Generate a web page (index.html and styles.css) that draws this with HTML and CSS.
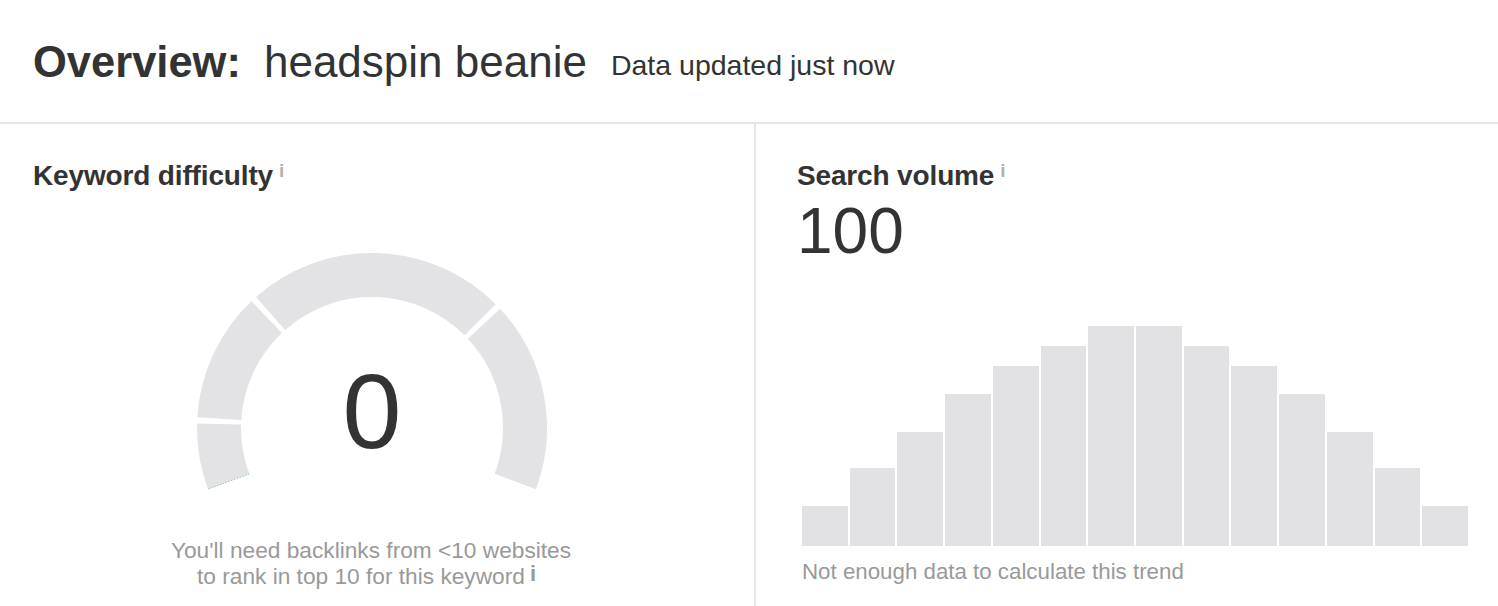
FILE: index.html
```html
<!DOCTYPE html>
<html lang="en">
<head>
<meta charset="utf-8">
<title>Overview: headspin beanie</title>
<link rel="stylesheet" href="styles.css">
</head>
<body>
<header class="top">
  <h1 class="title"><span class="title-label">Overview:</span><span class="title-kw">headspin beanie</span></h1><span class="updated">Data updated just now</span>
</header>
<main class="panels">
  <section class="panel panel-kd">
    <h2 class="panel-title">Keyword difficulty<span class="info">i</span></h2>
    <div class="gauge">
      <svg class="gauge-svg" width="350" height="238" viewBox="0 0 350 238">
        <g fill="none" stroke="#e3e3e5" stroke-width="44">
          <path d="M31.69 228.58 A153 153 0 0 1 22.05 170.99"/>
          <path d="M22.29 165.66 A153 153 0 0 1 69.68 64.02"/>
          <path d="M73.62 60.41 A153 153 0 0 1 283.19 66.81"/>
          <path d="M286.90 70.65 A153 153 0 0 1 318.31 228.58"/>
        </g>
        <line x1="11.5" y1="236" x2="52.3" y2="220.9" stroke="#6cbf8e" stroke-width="1" stroke-dasharray="1.5 1.5" opacity="0.75"/>
      </svg>
      <div class="gauge-value">0</div>
    </div>
    <p class="note">You'll need backlinks from &lt;10 websites<br>to rank in top 10 for this keyword<span class="info info-note">i</span></p>
  </section>
  <section class="panel panel-sv">
    <h2 class="panel-title">Search volume<span class="info">i</span></h2>
    <div class="volume">100</div>
    <div class="chart">
      <div class="bar" style="height:40px"></div>
      <div class="bar" style="height:78px"></div>
      <div class="bar" style="height:114px"></div>
      <div class="bar" style="height:152px"></div>
      <div class="bar" style="height:180px"></div>
      <div class="bar" style="height:200px"></div>
      <div class="bar" style="height:220px"></div>
      <div class="bar" style="height:220px"></div>
      <div class="bar" style="height:200px"></div>
      <div class="bar" style="height:180px"></div>
      <div class="bar" style="height:152px"></div>
      <div class="bar" style="height:114px"></div>
      <div class="bar" style="height:78px"></div>
      <div class="bar" style="height:40px"></div>
    </div>
    <p class="trend">Not enough data to calculate this trend</p>
  </section>
</main>
</body>
</html>
```
FILE: styles.css
```css
* { box-sizing: border-box; }
html, body {
  margin: 0;
  padding: 0;
  background: #fff;
}
body {
  font-family: "Liberation Sans", Arial, Helvetica, sans-serif;
  color: #333;
  width: 1498px;
  height: 606px;
  overflow: hidden;
}
.top {
  height: 124px;
  padding: 37px 0 0 33px;
  border-bottom: 2px solid #e6e6e6;
  white-space: nowrap;
  line-height: 50px;
}
.title {
  display: inline;
  margin: 0;
  font-size: 44px;
  font-weight: normal;
  color: #333;
}
.title-label {
  font-weight: bold;
  font-size: 43.5px;
  margin-right: 23px;
}
.updated {
  font-size: 28.5px;
  margin-left: 24px;
  color: #333;
  vertical-align: 2px;
}
.panels {
  display: flex;
  height: 482px;
}
.panel {
  padding-top: 36px;
}
.panel-kd {
  width: 756px;
  padding-left: 33px;
  padding-right: 45px;
  border-right: 2px solid #e6e6e6;
  display: flex;
  flex-direction: column;
}
.panel-sv {
  flex: 1;
  padding-left: 41px;
  display: flex;
  flex-direction: column;
}
.panel-title {
  margin: 0;
  font-size: 28px;
  line-height: 32px;
  font-weight: bold;
  color: #333;
  letter-spacing: -0.15px;
}
.info {
  font-size: 19px;
  font-weight: bold;
  color: #b0b0b0;
  line-height: 0;
  vertical-align: 8px;
  margin-left: 6px;
  letter-spacing: 0;
}
.gauge {
  position: relative;
  width: 350px;
  height: 238px;
  margin: 61px 0 0 164px;
}
.gauge-svg {
  display: block;
}
.gauge-value {
  position: absolute;
  left: 0;
  right: 0;
  top: 105px;
  text-align: center;
  font-size: 106px;
  line-height: 106px;
  color: #333;
}
.note {
  margin: 46px 0 0;
  text-align: center;
  font-size: 22.7px;
  line-height: 26px;
  color: #999;
}
.info-note {
  font-size: 22px;
  margin-left: 5px;
  margin-right: 9px;
  vertical-align: 3px;
  color: #999;
}
.volume {
  font-size: 64px;
  line-height: 64px;
  margin-top: 7px;
  color: #333;
}
.chart {
  display: flex;
  align-items: flex-end;
  gap: 2px;
  width: 666px;
  height: 220px;
  margin: 63px 0 0 5px;
}
.bar {
  flex: 1;
  background: #e2e2e4;
}
.trend {
  margin: 13px 0 0 5px;
  font-size: 22.3px;
  line-height: 26px;
  color: #999;
}
```
